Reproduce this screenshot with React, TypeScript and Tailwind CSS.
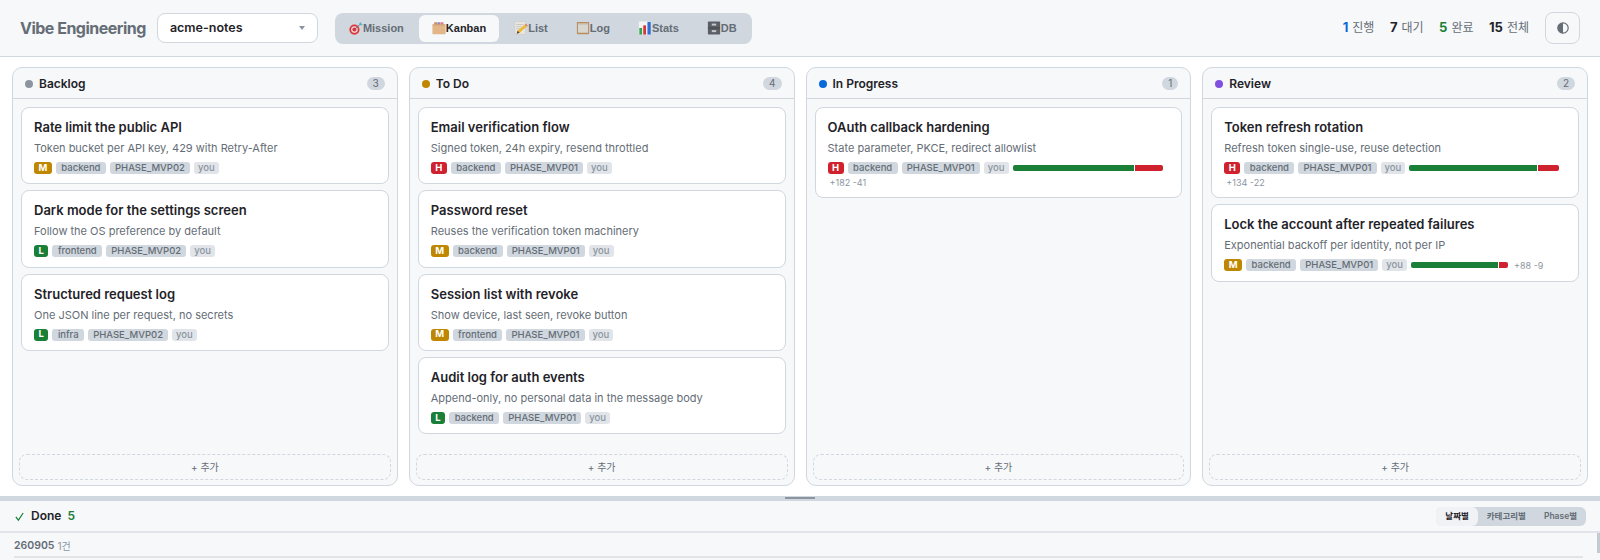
const ui = '"Inter", "Noto Sans CJK KR", sans-serif';

type Pri = "H" | "M" | "L";
type Task = {
  title: string;
  desc: string;
  pri: Pri;
  tag: string;
  phase: string;
  add?: number;
  del?: number;
  wide?: boolean;
};

const priClass: Record<Pri, string> = {
  H: "bg-[#cf222e]",
  M: "bg-[#bf8700]",
  L: "bg-[#1a7f37]",
};

const columns: { name: string; dot: string; tasks: Task[] }[] = [
  {
    name: "Backlog",
    dot: "bg-[#8c959f]",
    tasks: [
      { title: "Rate limit the public API", desc: "Token bucket per API key, 429 with Retry-After", pri: "M", tag: "backend", phase: "PHASE_MVP02" },
      { title: "Dark mode for the settings screen", desc: "Follow the OS preference by default", pri: "L", tag: "frontend", phase: "PHASE_MVP02" },
      { title: "Structured request log", desc: "One JSON line per request, no secrets", pri: "L", tag: "infra", phase: "PHASE_MVP02" },
    ],
  },
  {
    name: "To Do",
    dot: "bg-[#bf8700]",
    tasks: [
      { title: "Email verification flow", desc: "Signed token, 24h expiry, resend throttled", pri: "H", tag: "backend", phase: "PHASE_MVP01" },
      { title: "Password reset", desc: "Reuses the verification token machinery", pri: "M", tag: "backend", phase: "PHASE_MVP01" },
      { title: "Session list with revoke", desc: "Show device, last seen, revoke button", pri: "M", tag: "frontend", phase: "PHASE_MVP01" },
      { title: "Audit log for auth events", desc: "Append-only, no personal data in the message body", pri: "L", tag: "backend", phase: "PHASE_MVP01" },
    ],
  },
  {
    name: "In Progress",
    dot: "bg-[#0969da]",
    tasks: [
      { title: "OAuth callback hardening", desc: "State parameter, PKCE, redirect allowlist", pri: "H", tag: "backend", phase: "PHASE_MVP01", add: 182, del: 41, wide: true },
    ],
  },
  {
    name: "Review",
    dot: "bg-[#8250df]",
    tasks: [
      { title: "Token refresh rotation", desc: "Refresh token single-use, reuse detection", pri: "H", tag: "backend", phase: "PHASE_MVP01", add: 134, del: 22, wide: true },
      { title: "Lock the account after repeated failures", desc: "Exponential backoff per identity, not per IP", pri: "M", tag: "backend", phase: "PHASE_MVP01", add: 88, del: 9 },
    ],
  },
];

function MissionIcon() {
  return (
    <svg width="14" height="14" viewBox="0 0 16 16" className="-ml-px shrink-0">
      <circle cx="6.2" cy="9.8" r="5.8" fill="#d9363e" />
      <circle cx="6.2" cy="9.8" r="3.8" fill="#f4d6d2" />
      <circle cx="6.2" cy="9.8" r="2.3" fill="#d9363e" />
      <path d="M6.5 9.5 L12.5 4" stroke="#5f6670" strokeWidth="1" />
      <path d="M11.5 3 L13.5 1 L14 3 L16 3.5 L13.5 5.5 Z" fill="#4fb6c9" />
    </svg>
  );
}

function KanbanIcon() {
  return (
    <svg width="14" height="14" viewBox="0 0 16 16" className="shrink-0">
      <rect x="2.5" y="1.5" width="3.5" height="4" fill="#c98a6a" />
      <rect x="6.2" y="1.5" width="3.2" height="4" fill="#8d86c9" />
      <rect x="9.6" y="1.5" width="3.5" height="4" fill="#d77a8a" />
      <rect x="0.5" y="4" width="15" height="11" rx="0.6" fill="#e3b687" />
      <rect x="0.5" y="4" width="15" height="1" fill="#cf9d6c" />
    </svg>
  );
}

function ListIcon() {
  return (
    <svg width="14" height="14" viewBox="0 0 16 16" className="shrink-0">
      <rect x="1" y="1" width="12" height="14" fill="#e8e6e1" stroke="#c9c6be" strokeWidth="0.5" />
      <path d="M2.5 4H11M2.5 6.5H9M2.5 9H7" stroke="#b8b5ad" strokeWidth="0.7" />
      <path d="M3 14.5 L4 11 L12.5 4 L14.8 6.3 L6.5 13.5 Z" fill="#eeb93a" />
      <path d="M12.5 4 L13.5 3 L15.8 5.3 L14.8 6.3 Z" fill="#d9705f" />
      <path d="M3 14.5 L4 11 L6.5 13.5 Z" fill="#5a4a3a" />
    </svg>
  );
}

function LogIcon() {
  return (
    <svg width="14" height="14" viewBox="0 0 16 16" className="shrink-0">
      <rect x="1" y="1" width="14" height="14" rx="0.8" fill="#b98d5f" />
      <rect x="2.2" y="2.8" width="11.6" height="10.6" fill="#d8d7cf" />
      <path d="M2.2 4H13.8" stroke="#bdbab0" strokeWidth="0.6" />
    </svg>
  );
}

function StatsIcon() {
  return (
    <svg width="14" height="14" viewBox="0 0 16 16" className="shrink-0">
      <rect x="1" y="0.5" width="14" height="15" fill="#f4f4f2" />
      <rect x="1.5" y="8" width="3.2" height="7.5" fill="#2fa84f" />
      <rect x="6" y="5" width="3.2" height="10.5" fill="#d8343a" />
      <rect x="10.8" y="1" width="3.8" height="14.5" fill="#2f6fd6" />
    </svg>
  );
}

function DbIcon() {
  return (
    <svg width="14" height="14" viewBox="0 0 16 16" className="shrink-0">
      <rect x="1" y="0.5" width="14" height="15" rx="0.8" fill="#5c6066" />
      <path d="M1 8H15" stroke="#33363a" strokeWidth="0.8" />
      <rect x="5.5" y="3" width="5" height="2.2" fill="#c7cacd" />
      <rect x="5.5" y="10.5" width="5" height="2.2" fill="#c7cacd" />
    </svg>
  );
}

const tabs = [
  { label: "Mission", Icon: MissionIcon },
  { label: "Kanban", Icon: KanbanIcon, active: true },
  { label: "List", Icon: ListIcon },
  { label: "Log", Icon: LogIcon },
  { label: "Stats", Icon: StatsIcon },
  { label: "DB", Icon: DbIcon },
];

function Header() {
  return (
    <header className="flex h-[57px] shrink-0 items-center border-b border-[#d0d7de] bg-[#f6f8fa] pl-5 pr-5">
      <span className="text-[16px] font-bold tracking-[-0.5px] text-[#656d76]">Vibe Engineering</span>
      <button className="ml-[11px] flex h-[30px] w-[161px] items-center justify-between rounded-lg border border-[#d0d7de] bg-white px-3 text-[12.5px] font-semibold text-[#1f2328]">
        acme-notes
        <svg width="6" height="4" viewBox="0 0 6 4"><path d="M0 0H6L3 4Z" fill="#8c959f" /></svg>
      </button>
      <nav className="ml-[17px] flex h-[31px] items-center gap-[2px] rounded-lg bg-[#d0d7de] p-[2px] font-['Liberation_Sans',sans-serif]">
        {tabs.map(({ label, Icon, active }) => (
          <span
            key={label}
            className={`flex h-[27px] items-center justify-center rounded-md px-[13px] text-[11px] font-bold ${active ? "bg-[#f6f8fa] text-[#1f2328]" : "text-[#656d76]"}`}
          >
            <Icon />
            {label}
          </span>
        ))}
      </nav>
      <div className="ml-auto flex items-center gap-[15.5px] text-[12px] text-[#656d76]">
        <span><b className="mr-1 text-[13px] font-bold text-[#0969da]">1</b>진행</span>
        <span><b className="mr-1 text-[13px] font-bold text-[#1f2328]">7</b>대기</span>
        <span><b className="mr-1 text-[13px] font-bold text-[#1a7f37]">5</b>완료</span>
        <span><b className="mr-1 text-[13px] font-bold text-[#1f2328]">15</b>전체</span>
      </div>
      <button className="ml-4 flex h-8 w-[35px] items-center justify-center rounded-lg border border-[#d0d7de] bg-[#f6f8fa] text-[#656d76]">
        <svg width="12" height="12" viewBox="0 0 12 12">
          <circle cx="6" cy="6" r="5.2" fill="none" stroke="currentColor" strokeWidth="1.2" />
          <path d="M6 0.8 A5.2 5.2 0 0 0 6 11.2 Z" fill="currentColor" />
        </svg>
      </button>
    </header>
  );
}

function Chip({ children, muted, wide }: { children: React.ReactNode; muted?: boolean; wide?: boolean }) {
  return (
    <span className={`rounded-[3px] text-[9.5px] font-medium leading-[12px] ${wide ? "px-[5.5px]" : muted ? "px-[4px]" : "px-[5px]"} ${muted ? "bg-[#e1e5ea] text-[#8c959f]" : "bg-[#d0d7de] text-[#656d76]"}`}>
      {children}
    </span>
  );
}

function DiffBar({ add, del }: { add: number; del: number }) {
  return (
    <div className="flex h-[6px] w-full gap-px overflow-hidden rounded-[2px]">
      <div className="bg-[#1a7f37]" style={{ flexGrow: add }} />
      <div className="bg-[#cf222e]" style={{ flexGrow: del }} />
    </div>
  );
}

function Card({ task }: { task: Task }) {
  const hasDiff = task.add !== undefined && task.del !== undefined;
  return (
    <div className={`shrink-0 rounded-lg border border-[#d0d7de] bg-white px-3 pt-[10px] ${hasDiff && task.wide ? "pb-[6.7px]" : "pb-[9.3px]"}`}>
      <div className="text-[13px] font-semibold leading-[19px] text-[#1f2328]">{task.title}</div>
      <div className="mt-[2px] text-[11px] leading-[18px] text-[#656d76]">{task.desc}</div>
      <div className="mt-[5px] flex items-center gap-1">
        <span className={`flex h-[12px] items-center rounded-[3px] px-[4.5px] text-[9.5px] font-bold text-white ${priClass[task.pri]}`}>{task.pri}</span>
        <Chip wide>{task.tag}</Chip>
        <Chip>{task.phase}</Chip>
        <Chip muted>you</Chip>
        {hasDiff && task.wide && (
          <div className="w-[150px]"><DiffBar add={task.add!} del={task.del!} /></div>
        )}
        {hasDiff && !task.wide && (
          <>
            <div className="w-[97px]"><DiffBar add={task.add!} del={task.del!} /></div>
            <span className="ml-[2px] text-[9px] text-[#8c959f]">+{task.add} -{task.del}</span>
          </>
        )}
      </div>
      {hasDiff && task.wide && (
        <div className="mt-[2px] pl-[2px] text-[9px] leading-[14px] text-[#8c959f]">+{task.add} -{task.del}</div>
      )}
    </div>
  );
}

function Column({ name, dot, tasks }: { name: string; dot: string; tasks: Task[] }) {
  return (
    <section className="flex min-w-0 flex-col rounded-[10px] border border-[#d0d7de] bg-[#f6f8fa]">
      <div className="flex h-[31px] shrink-0 items-center border-b border-[#d0d7de] pl-3 pr-3 pt-px">
        <span className={`h-2 w-2 rounded-full ${dot}`} />
        <span className="ml-[6px] text-[12px] font-semibold text-[#1f2328]">{name}</span>
        <span className="ml-auto rounded-full bg-[#d0d7de] px-[6px] text-[10px] leading-[13px] text-[#656d76]">{tasks.length}</span>
      </div>
      <div className="flex min-h-0 flex-1 flex-col gap-[6px] px-2 pt-2">
        {tasks.map((t) => <Card key={t.title} task={t} />)}
      </div>
      <div className="mx-[6px] mb-[5px] flex h-[26px] shrink-0 items-center justify-center rounded-lg border border-dashed border-[#d0d7de] text-[10px] text-[#656d76]">
        + 추가
      </div>
    </section>
  );
}

function DoneBar() {
  return (
    <div className="flex h-[32px] shrink-0 items-center border-b-2 border-[#e1e5ea] bg-[#f6f8fa] px-[14px]">
      <svg width="11" height="11" viewBox="0 0 12 12" fill="none" stroke="#1a7f37" strokeWidth="1.3"><path d="M2 6.5 L4.8 10 L10 2.2" /></svg>
      <span className="ml-[6px] text-[12px] font-semibold text-[#1f2328]">Done</span>
      <span className="ml-[6px] text-[12px] font-semibold text-[#1a7f37]">5</span>
      <div className="ml-auto flex h-[19px] items-center rounded-md bg-[#d0d7de] text-[8.5px] font-semibold text-[#656d76]">
        <span className="flex h-[19px] items-center rounded-md bg-[#f0f2f5] px-[9px] text-[#1f2328]">날짜별</span>
        <span className="px-[9px]">카테고리별</span>
        <span className="px-[9px]">Phase별</span>
      </div>
    </div>
  );
}

export default function App() {
  return (
    <div className="flex h-[560px] w-[1600px] flex-col overflow-hidden bg-white" style={{ fontFamily: ui }}>
      <Header />
      <main className="grid h-[439px] shrink-0 grid-cols-4 gap-[11px] px-3 pb-[10px] pt-[10px]">
        {columns.map((c) => <Column key={c.name} {...c} />)}
      </main>
      <div className="flex h-[5px] shrink-0 justify-center bg-[#d0d7de]">
        <div className="mt-[1px] h-[2px] w-[30px] bg-[#8c959f]" />
      </div>
      <DoneBar />
      <div className="relative flex-1 bg-[#f6f8fa]">
        <div className="ml-[14px] mr-[17px] flex h-[25px] items-center border-b-2 border-[#e1e5ea] pt-[3px] text-[10px] text-[#656d76]">
          <span className="text-[10.5px] font-semibold">260905</span>
          <span className="ml-[3px] text-[#8c959f]">1건</span>
        </div>
        <div className="absolute right-0 top-0 h-5 w-[3px] bg-[#c4cad1]" />
      </div>
    </div>
  );
}
